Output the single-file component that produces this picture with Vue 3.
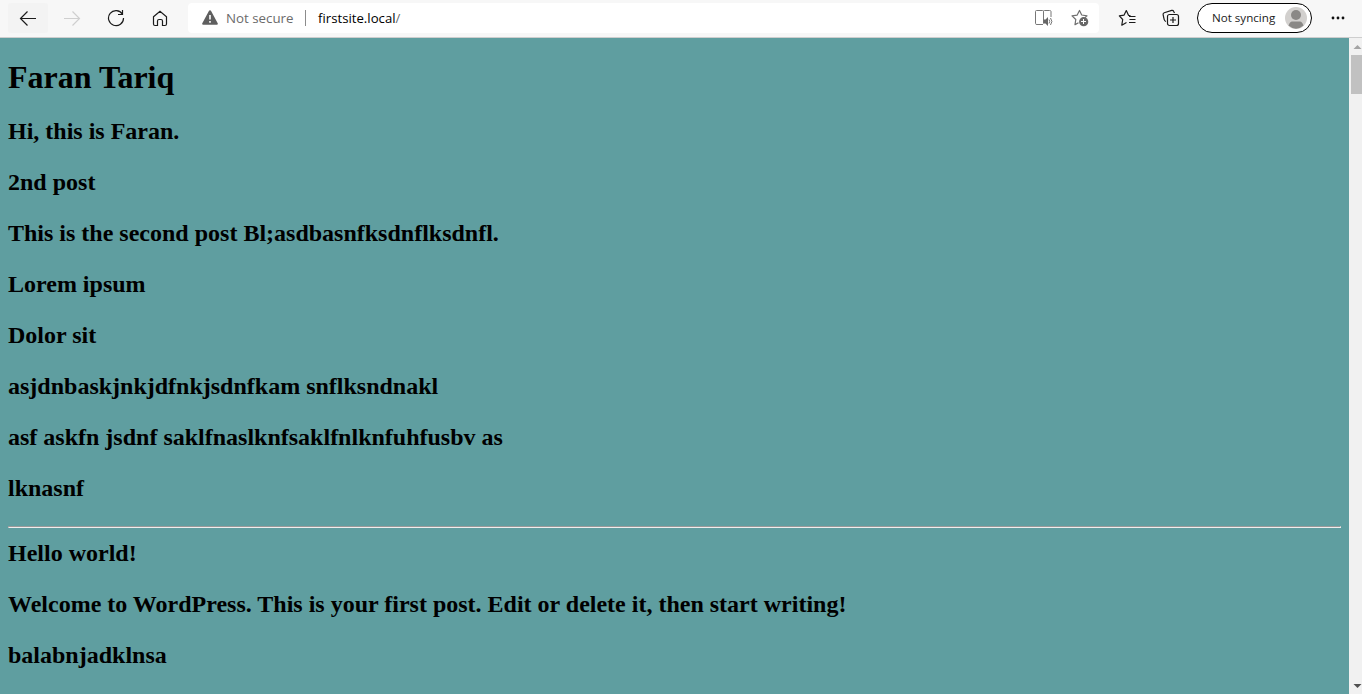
<script setup>
const posts = [
  'Hi, this is Faran.',
  '2nd post',
  'This is the second post Bl;asdbasnfksdnflksdnfl.',
  'Lorem ipsum',
  'Dolor sit',
  'asjdnbaskjnkjdfnkjsdnfkam snflksndnakl',
  'asf askfn jsdnf saklfnaslknfsaklfnlknfuhfusbv as',
  'lknasnf',
]
const older = [
  'Hello world!',
  'Welcome to WordPress. This is your first post. Edit or delete it, then start writing!',
  'balabnjadklnsa',
]
</script>

<template>
  <div class="browser">
    <header class="toolbar">
      <button class="nav back" aria-label="Back">
        <svg width="18" height="18" viewBox="0 0 18 18"><path d="M17 9.5H2M8.5 2.5l-7 7 7 7" /></svg>
      </button>
      <button class="nav forward" aria-label="Forward">
        <svg width="18" height="18" viewBox="0 0 18 18"><path d="M1 9.5h15M9.5 2.5l7 7-7 7" /></svg>
      </button>
      <button class="nav" aria-label="Refresh">
        <svg width="18" height="18" viewBox="0 0 18 18"><path d="M15.4 5.2A7.5 7.5 0 1 0 16.5 9M15.5 1v4.5H11" /></svg>
      </button>
      <button class="nav" aria-label="Home">
        <svg width="18" height="18" viewBox="0 0 18 18"><path d="M2.500 7.800 9 2.200l6.500 5.600v7.200q0 1.500-1.500 1.500h-2.500v-4.500q0-1.500-1.500-1.500H8q-1.500 0-1.500 1.500v4.500H4q-1.500 0-1.500-1.500z" /></svg>
      </button>
      <div class="address">
        <svg class="warning" width="16" height="15" viewBox="0 0 16 15"><path d="M8 0.300q.7 0 1.100.8l6.600 12.200q.5 1.500-.9 1.500H1.200q-1.400 0-.9-1.500L6.900 1.100Q7.300.3 8 .3z" fill="#5f5f5f" /><path d="M8 5v4.500M8 11v1.800" stroke="#fff" stroke-width="1.600" /></svg>
        <span class="secure">Not secure</span>
        <i class="divider"></i>
        <span class="url">firstsite.local<span class="slash">/</span></span>
        <svg class="reader" width="18" height="18" viewBox="0 0 18 18"><path d="M8 15.500H2Q.500 15.500.500 14.500V2.500Q.500 1.500 1.500 1.500h6q1 0 1 1v12M8.500 2.500q0-1 1-1h5q1.500 0 1.500 1V8" fill="none" stroke="#777" /><path d="M8.500 10.500h2L13 8v9l-2.500-2.500h-2z" fill="#666" /><path d="M14 10.500q1.500 2 0 4M15.500 9q2.800 3.500 0 7" fill="none" stroke="#777" /></svg>
        <svg class="favorite" width="18" height="18" viewBox="0 0 18 18"><path d="M7.500 13.700 4 15.600l.8-5.100L1 6.900l5.200-.8 2.300-4.600L10.700 6l5.300.8L14 8.600" fill="none" stroke="#6f6f6f" stroke-width="1.200" stroke-linejoin="round" /><circle cx="12.700" cy="12.700" r="4.600" fill="#686868" /><path d="M12.500 10v5M10 12.500h5" stroke="#fff" /></svg>
      </div>
      <button class="nav favorites" aria-label="Favorites">
        <svg width="18" height="18" viewBox="0 0 18 18"><path d="M8.500 13.500 3.800 16.200l.9-5.700L1.300 6.900l4.800-.8L8.300 1.600 10.500 6.300l2 .2M11 7.500h6.500M11.500 10.500h6M11 13.500h6.500" stroke-linejoin="round" /></svg>
      </button>
      <button class="nav collections" aria-label="Collections">
        <svg width="18" height="18" viewBox="0 0 18 18"><path d="M4 12.500Q2.500 12 2.200 10.500L1.100 5.600Q.900 4.200 2.200 3.700l7.500-2.300q1.500-.3 2 1L12.500 4" /><rect x="5.500" y="5.500" width="11" height="11" rx="2" /><path d="M11 8v6M8 11h6" /></svg>
      </button>
      <button class="profile">
        <span>Not syncing</span>
        <svg width="22" height="22" viewBox="0 0 22 22"><circle cx="11" cy="11" r="11" fill="#d2d0ce" /><circle cx="11" cy="8" r="5" fill="#8a8886" /><path d="M3.500 18.500Q5 14.500 7 14.500h8q2 0 3.500 4Q11 25 3.500 18.500z" fill="#8a8886" /></svg>
      </button>
      <svg class="more" width="14" height="4" viewBox="0 0 14 4"><circle cx="2" cy="2" r="1.400" /><circle cx="7" cy="2" r="1.400" /><circle cx="12" cy="2" r="1.400" /></svg>
    </header>
    <div class="viewport">
      <main class="page">
        <h1>Faran Tariq</h1>
        <p v-for="text in posts" :key="text">{{ text }}</p>
        <hr />
        <p v-for="text in older" :key="text">{{ text }}</p>
      </main>
      <div class="scrollbar">
        <svg class="arrow" width="13" height="17" viewBox="0 0 13 17"><path d="M4.500 11 8.500 7l4 4z" fill="#a3a3a3" /></svg>
        <div class="thumb"></div>
        <svg class="arrow down" width="13" height="17" viewBox="0 0 13 17"><path d="M4.500 7h8l-4 4z" fill="#505050" /></svg>
      </div>
    </div>
  </div>
</template>

<style>
body {
  overflow: hidden;
}
</style>

<style scoped>
.browser {
  display: flex;
  flex-direction: column;
  width: 1362px;
  height: 694px;
  overflow: hidden;
}
.toolbar {
  display: flex;
  align-items: center;
  box-sizing: border-box;
  flex: none;
  height: 38px;
  padding: 0 0 2px 8px;
  background: #f7f7f7;
  border-bottom: 1px solid #cecece;
  font-family: "Open Sans", "Noto Sans", sans-serif;
}
button {
  border: 0;
  background: none;
  font: inherit;
}
.nav {
  display: flex;
  align-items: center;
  justify-content: center;
  flex: none;
  width: 40px;
  height: 30px;
  margin-right: 4px;
  padding: 0;
  border-radius: 3px;
}
.nav svg {
  fill: none;
  stroke: #1b1b1b;
  stroke-width: 1.2;
}
.back {
  background: #f3f3f3;
}
.nav.forward svg {
  stroke: #cfcfcf;
}
.address {
  display: flex;
  align-items: center;
  box-sizing: border-box;
  width: 911px;
  height: 30px;
  margin-left: 4px;
  padding-left: 14px;
  border-radius: 4px;
  background: #fff;
}
.warning {
  margin-top: -1px;
}
.secure {
  width: 67px;
  margin-left: 8px;
  color: #6b6b6b;
  font-size: 13.3px;
  white-space: nowrap;
}
.divider {
  width: 1px;
  height: 16px;
  margin: 0 12px;
  background: #8c8c8c;
}
.url {
  color: #000;
  font-size: 13.2px;
}
.slash {
  color: #6b6b6b;
}
.reader {
  margin-left: auto;
}
.favorite {
  margin: 0 10px 0 18px;
}
.favorites {
  margin-left: 8px;
}
.profile {
  display: flex;
  align-items: center;
  justify-content: space-between;
  box-sizing: border-box;
  width: 115px;
  height: 30px;
  margin-left: 2px;
  padding: 0 4px 0 14px;
  border: 1px solid #000;
  border-radius: 15px;
  background: #fff;
  font-size: 11.6px;
  color: #222;
  white-space: nowrap;
}
.more {
  margin-left: 19px;
  fill: #111;
}
.viewport {
  display: flex;
  flex: 1;
  min-height: 0;
}
.page {
  width: 1333px;
  padding: 0 8px;
  overflow: hidden;
  background: #5f9ea0;
  color: #000;
  font-family: "Liberation Serif", "Times New Roman", serif;
  font-weight: bold;
}
h1 {
  margin: 21px 0 22px;
  font-size: 32px;
  line-height: 37px;
}
p {
  margin: 0 0 24px;
  font-size: 24px;
  line-height: 27px;
}
hr {
  height: 0;
  margin: 24px 0 12px;
  border: 1px solid;
  border-color: #9a9a9a #eee #eee #9a9a9a;
}
.scrollbar {
  display: flex;
  flex-direction: column;
  width: 13px;
  background: #f1f1f1;
}
.thumb {
  height: 39px;
  margin-left: 2px;
  background: #c1c1c1;
}
.down {
  margin-top: auto;
}
</style>
